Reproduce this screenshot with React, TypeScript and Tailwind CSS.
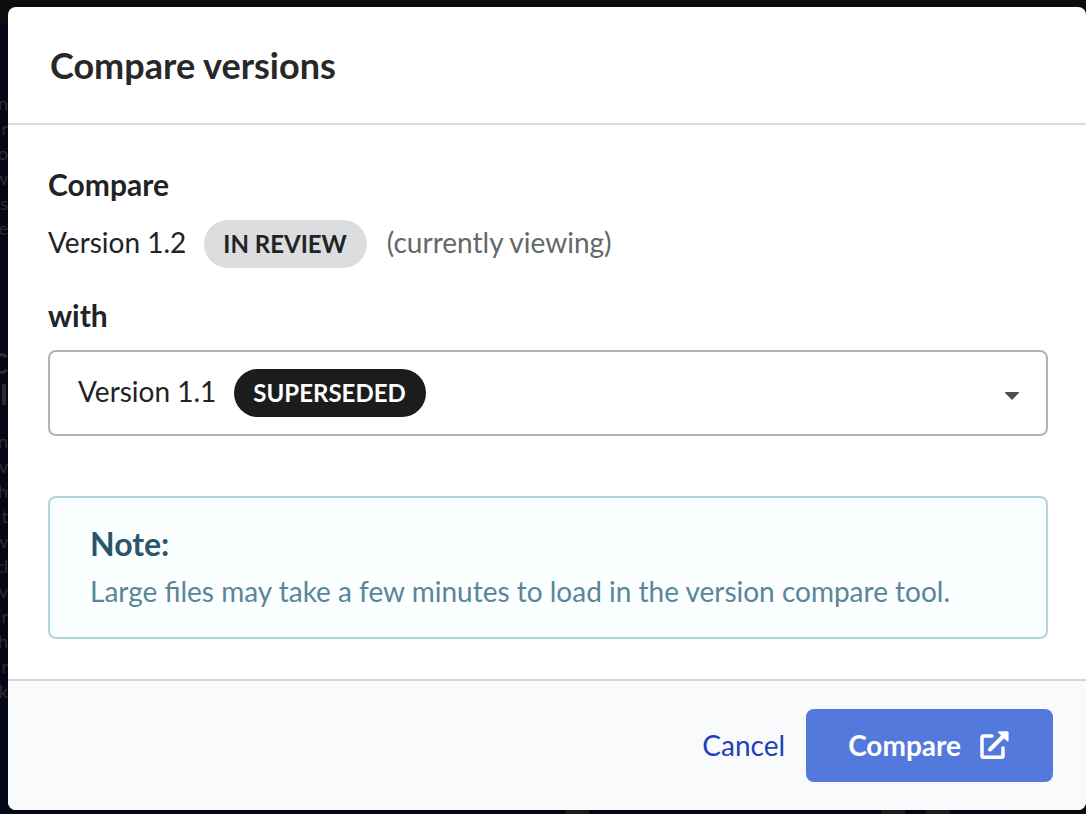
import { useState } from "react";

const introLines = ["n", "r", "o", "w", "gs", "he"];
const bodyLines = ["n", "ov", "th", "t", "w", "cl", "ev", "dr", "h", "· r", "k"];

const versions = [{ id: "1.1", label: "Version 1.1", status: "SUPERSEDED" }];

// sliver of the dimmed page that shows beside the dialog
function Backdrop() {
  return (
    <div
      aria-hidden="true"
      className="flex w-2 shrink-0 flex-col overflow-hidden pt-[67px] text-[#2d2d2d]"
    >
      {introLines.map((line, i) => (
        <span key={i} className="flex h-[25px] shrink-0 items-center justify-end whitespace-pre text-lg">
          {line}
        </span>
      ))}
      <div className="flex shrink-0 flex-col items-end pt-[108px] pb-[18px] text-[28px] leading-[31px] font-bold">
        <span>C</span>
        <span>I</span>
      </div>
      {bodyLines.map((line, i) => (
        <span key={i} className="flex h-[25px] shrink-0 items-center justify-end whitespace-pre text-lg">
          {line}
        </span>
      ))}
    </div>
  );
}

function ExternalIcon() {
  return (
    <svg width="30" height="30" viewBox="0 0 30 30" fill="none" aria-hidden="true">
      <path
        d="M13 6H4.5Q3 6 3 7.5V25.8Q3 27.3 4.5 27.3H22.5Q24 27.3 24 25.8V18"
        stroke="currentColor"
        strokeWidth="3.5"
        strokeLinecap="round"
      />
      <path d="M11 19.5L25 5.5" stroke="currentColor" strokeWidth="4" strokeLinecap="round" />
      <path
        d="M19.8 1.2H28.2Q29.6 1.2 29.6 2.6V10.8Q29 12.1 27.8 11.1L19.5 2.9Q18.8 1.6 19.8 1.2Z"
        fill="currentColor"
      />
    </svg>
  );
}

export default function App() {
  const [selected, setSelected] = useState("1.1");
  const current = versions.find((v) => v.id === selected) ?? versions[0];

  return (
    <div className="flex min-h-screen flex-col bg-[#0d0d0d] font-['Lato',sans-serif] text-[28px] leading-[36px] text-[#212324]">
      <div className="h-[7px]" />
      <div className="flex flex-1 bg-linear-to-b from-[#0d0d0d] from-[16px] to-[#050716] to-[17px]">
        <div className="flex flex-col">
          <div className="h-4" />
          <Backdrop />
        </div>
        <div
          role="dialog"
          aria-labelledby="dialog-title"
          className="flex min-w-0 flex-1 flex-col overflow-hidden rounded-lg bg-white"
        >
          <header className="border-b-2 border-[#dcdcdd] px-[42px] py-9">
            <h1 id="dialog-title" className="text-[36px] leading-[44px] font-bold text-[#272829]">
              Compare versions
            </h1>
          </header>

          <div className="flex-1 pt-[39px] pr-[38px] pb-10 pl-10">
            <h2 className="text-[30px] leading-[40px] font-bold">Compare</h2>
            <div className="mt-4 flex items-baseline">
              <span>Version 1.2</span>
              <span className="ml-[18px] flex h-12 items-center rounded-full bg-[#dcddde] pr-5 pl-[19px] text-2xl font-bold">
                IN REVIEW
              </span>
              <span className="ml-5 text-[#666767]">(currently viewing)</span>
            </div>

            <label htmlFor="version" className="mt-[27px] block text-[30px] leading-[40px] font-bold">
              with
            </label>
            <div className="relative mt-[15px] flex h-[86px] items-center rounded-lg border-2 border-[#b2b2b2] pr-[27px] pl-7">
              <div className="flex items-baseline">
                <span>{current.label}</span>
                <span className="ml-[18px] flex h-12 items-center rounded-full bg-[#1b1c1d] pr-5 pl-[19px] text-2xl font-bold text-white">
                  {current.status}
                </span>
              </div>
              <svg className="mt-1.5 ml-auto" width="14" height="8" viewBox="0 0 14 8" aria-hidden="true">
                <path d="M0.5 0H13.5Q14.3 0.4 13.6 1.2L7.8 7.3Q7 8 6.2 7.3L0.4 1.2Q-0.3 0.4 0.5 0Z" fill="#4c4d4e" />
              </svg>
              {/* native control sits over the styled value */}
              <select
                id="version"
                value={selected}
                onChange={(e) => setSelected(e.target.value)}
                className="absolute inset-0 h-full w-full cursor-pointer opacity-0"
              >
                {versions.map((v) => (
                  <option key={v.id} value={v.id}>
                    {v.label}
                  </option>
                ))}
              </select>
            </div>

            <div className="mt-[60px] rounded-lg border-2 border-[#afd5dd] bg-[#fbffff] px-10 pt-[26px] pb-7">
              <h3 className="text-[32px] leading-[40px] font-bold text-[#28566a]">Note:</h3>
              <p className="mt-[9px] text-[#598698]">
                Large files may take a few minutes to load in the version compare tool.
              </p>
            </div>
          </div>

          <footer className="flex items-baseline justify-end border-t-2 border-[#d5d6d7] bg-[#f9fafc] py-7 pr-[33px]">
            <button type="button" className="mr-[21px] cursor-pointer text-[#1f42b8]">
              Cancel
            </button>
            <button
              type="button"
              className="flex cursor-pointer items-center rounded-lg bg-[#5479dd] pt-[18px] pr-[44px] pb-[19px] pl-[42px] font-bold text-white"
            >
              Compare
              <span className="ml-[18px]">
                <ExternalIcon />
              </span>
            </button>
          </footer>
        </div>
      </div>
      {/* page content peeking out under the dialog */}
      <div className="flex h-1 bg-[#050716]">
        <div className="ml-[52%] w-6 bg-[#1c1c1c]" />
        <div className="ml-auto w-6 bg-[#1c1c1c]" />
        <div className="mr-[60px] ml-[21px] w-6 bg-[#1c1c1c]" />
        <div className="w-[76px] bg-[#0a0a0a]" />
      </div>
    </div>
  );
}
